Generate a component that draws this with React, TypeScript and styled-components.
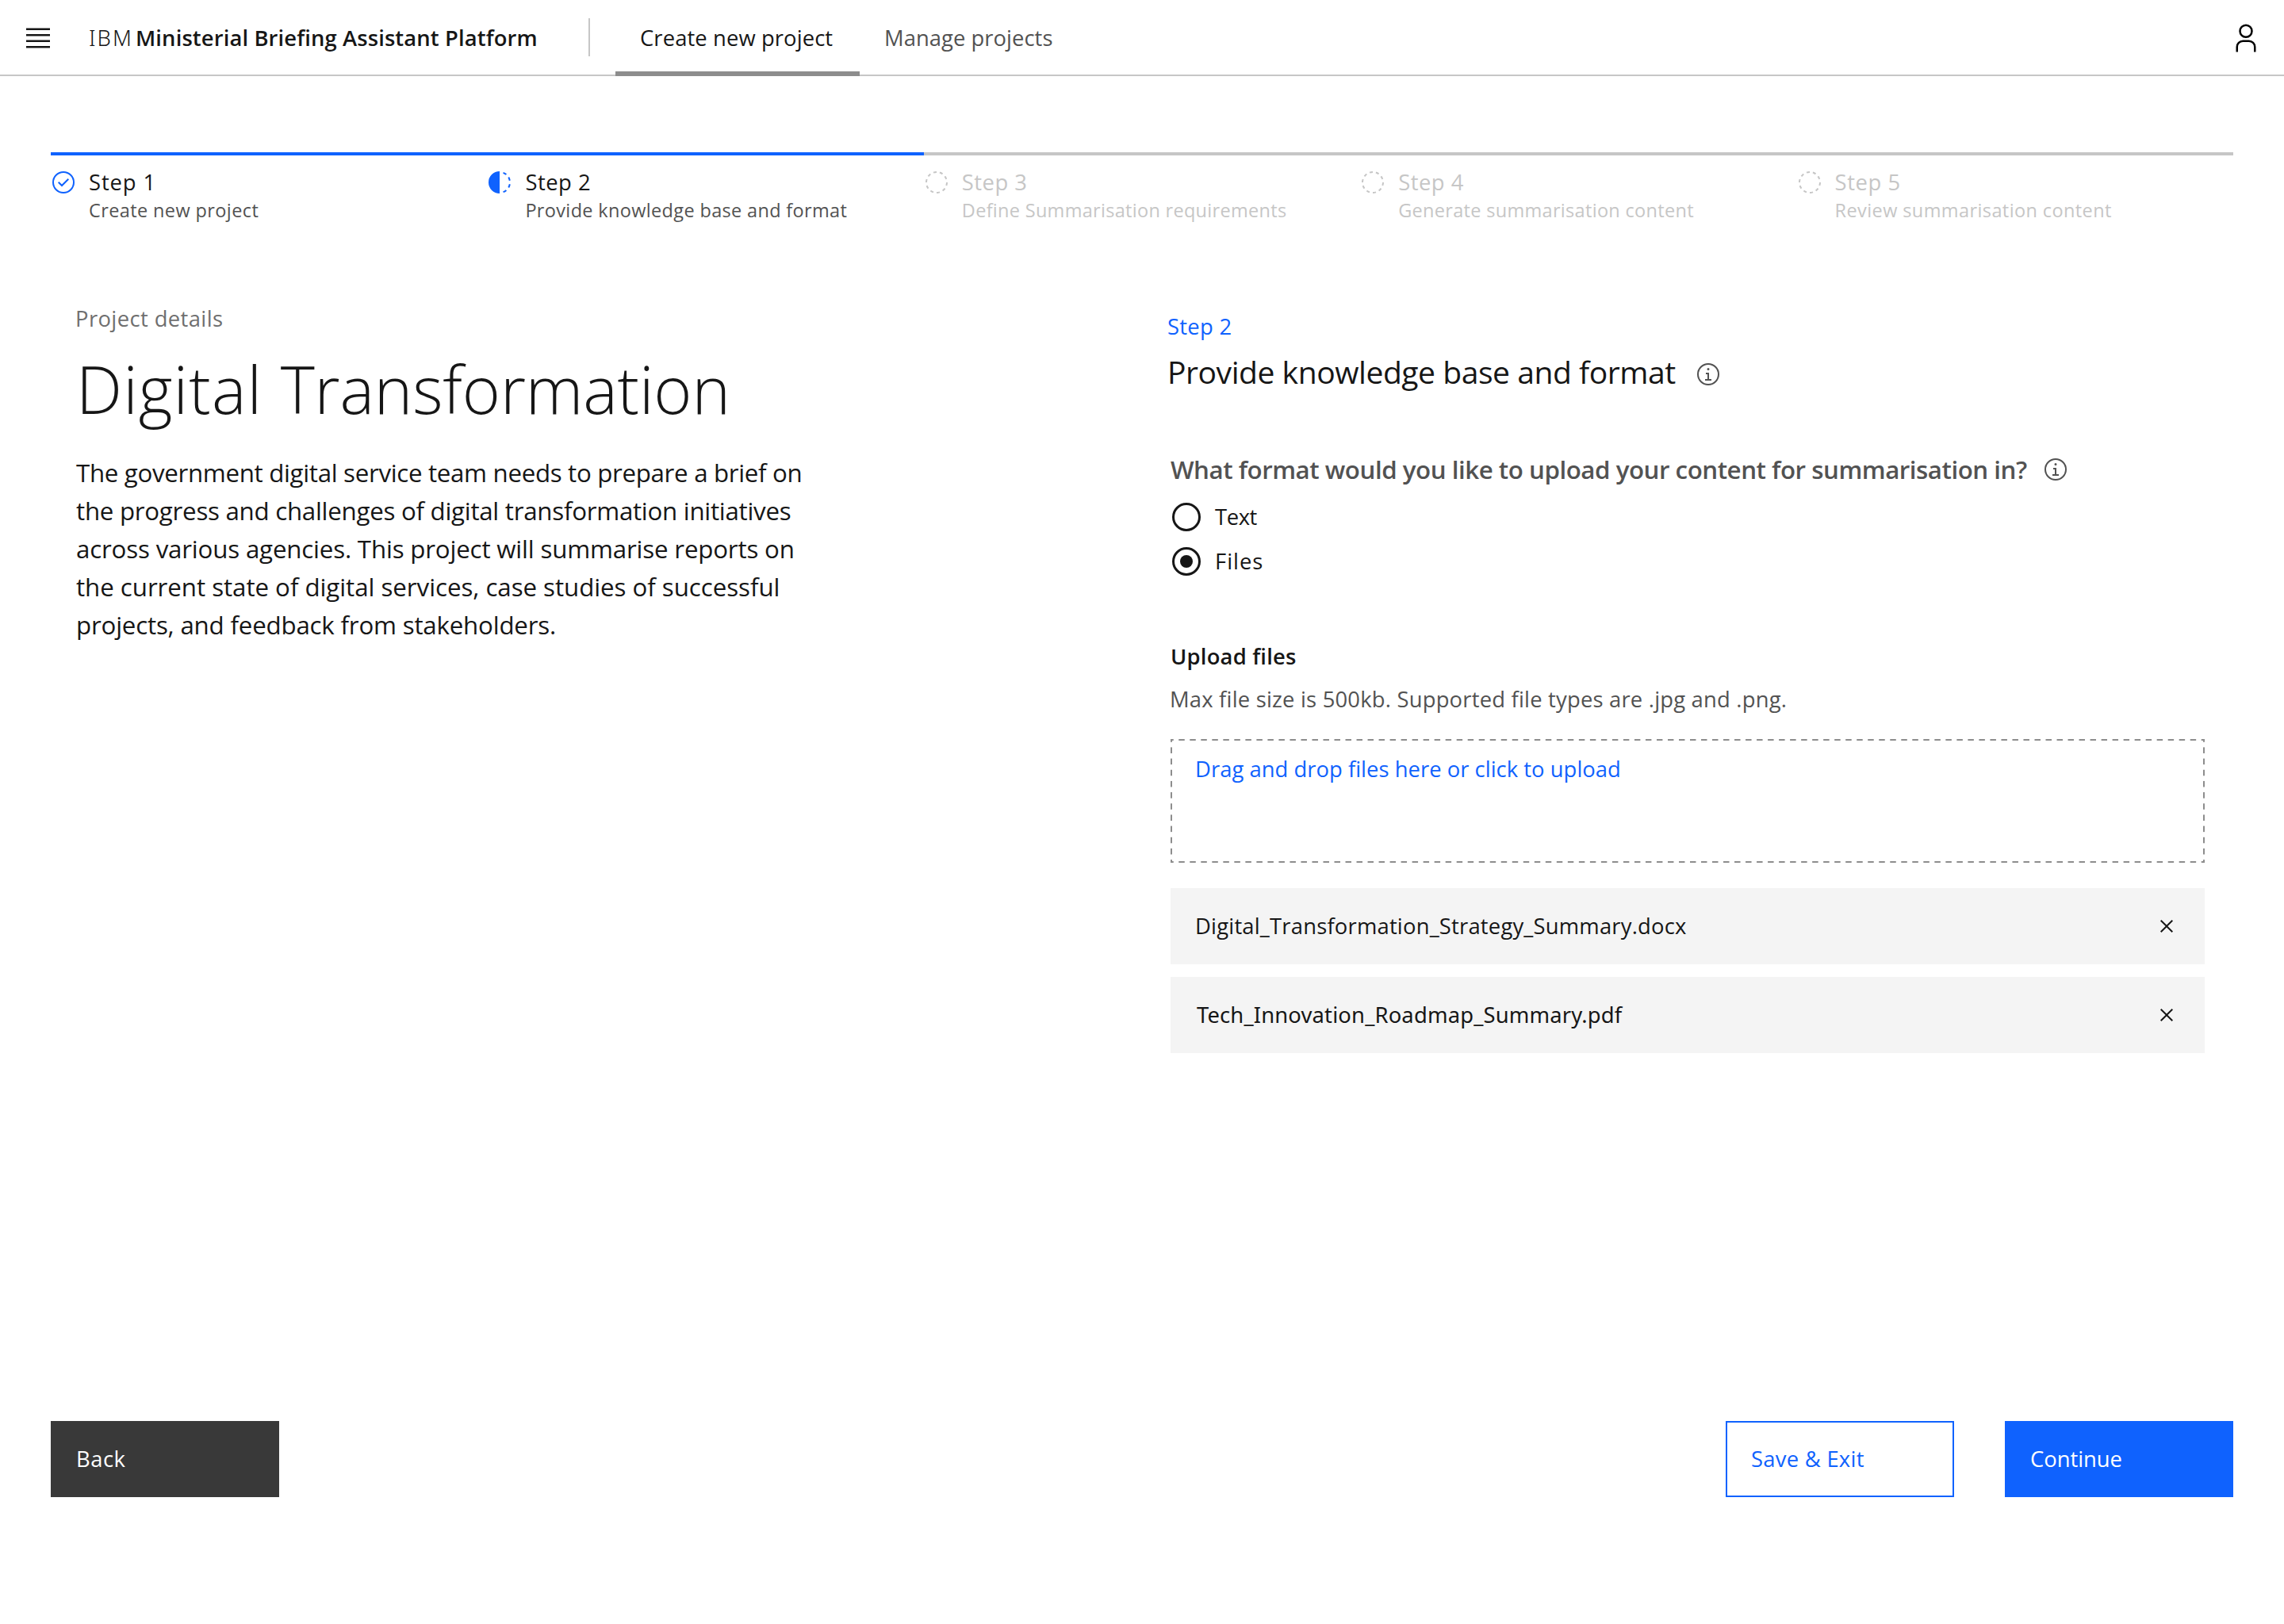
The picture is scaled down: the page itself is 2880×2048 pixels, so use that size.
import React from 'react';
import styled, { createGlobalStyle } from 'styled-components';

const color = {
  text: '#161616',
  secondary: '#525252',
  helper: '#6f6f6f',
  disabled: '#c6c6c6',
  border: '#8d8d8d',
  blue: '#0f62fe',
  dark: '#393939',
  layer: '#f4f4f4',
};

const GlobalStyle = createGlobalStyle`
  * { box-sizing: border-box; }
  body { margin: 0; background: #fff; }
  h1, h2, p { margin: 0; font-weight: inherit; }
  button { margin: 0; border: 0; padding: 0; background: none; font: inherit; text-align: left; }
`;

const Page = styled.div`
  display: flex;
  flex-direction: column;
  height: 2048px;
  font-family: 'Open Sans', 'Noto Sans', sans-serif;
  font-size: 27.4px;
  line-height: 36px;
  color: ${color.text};
  white-space: nowrap;
`;

const Text = styled.span<{ $ls?: number }>`
  letter-spacing: ${(p) => p.$ls ?? 0}px;
`;

const Glyph = styled.svg<{ $size?: number }>`
  display: block;
  flex: none;
  width: ${(p) => p.$size ?? 32}px;
  height: ${(p) => p.$size ?? 32}px;
  fill: currentColor;
`;

const Header = styled.header`
  display: flex;
  align-items: center;
  height: 96px;
  padding: 0 28px;
  border-bottom: 2px solid ${color.disabled};
  & > * { margin-bottom: -2px; }
`;
const Brand = styled.div`
  display: flex;
  width: 636px;
  margin-left: 44px;
  font-weight: 600;
`;
const BrandPrefix = styled.span`
  width: 59px;
  font-family: 'Noto Sans', sans-serif;
  font-weight: 300;
`;
const Divider = styled.div`
  width: 2px;
  height: 48px;
  margin: 0 32px 0 -6px;
  background: ${color.disabled};
`;
const Tab = styled.a<{ $active?: boolean }>`
  width: 308px;
  height: 96px;
  padding: 30px 31px 0;
  color: ${(p) => (p.$active ? color.text : color.secondary)};
  border-bottom: 6px solid ${(p) => (p.$active ? color.border : 'transparent')};
`;
const UserButton = styled.button`
  margin-left: auto;
`;

const Stepper = styled.ol`
  display: grid;
  grid-template-columns: repeat(5, 1fr);
  margin: 96px 64px 0;
  padding: 0;
  list-style: none;
`;
const Step = styled.li<{ $reached: boolean }>`
  display: flex;
  gap: 16px;
  padding-top: 16px;
  border-top: 4px solid ${(p) => (p.$reached ? color.blue : color.disabled)};
  color: ${(p) => (p.$reached ? color.text : color.disabled)};
`;
const StepIcon = styled.div<{ $reached: boolean }>`
  margin-top: 2px;
  color: ${(p) => (p.$reached ? color.blue : color.disabled)};
`;
const StepDesc = styled.div<{ $reached: boolean }>`
  font-size: 23.5px;
  line-height: 34px;
  color: ${(p) => (p.$reached ? color.secondary : color.disabled)};
`;

const Main = styled.main`
  display: grid;
  grid-template-columns: 1376px 1308px;
  padding-left: 96px;
`;
const Details = styled.section`
  padding-top: 102px;
`;
const Overline = styled.div`
  margin-left: -1px;
  color: ${color.helper};
`;
const Title = styled.h1`
  margin-top: 20px;
  font-size: 82.2px;
  line-height: 100px;
  font-weight: 300;
`;
const Summary = styled.p`
  display: flex;
  flex-direction: column;
  margin-top: 32px;
  font-size: 31.3px;
  line-height: 48px;
`;

const Form = styled.section`
  padding-top: 112px;
`;
const StepLink = styled.div`
  color: ${color.blue};
`;
const Heading = styled.h2`
  display: flex;
  justify-content: space-between;
  width: 698px;
  margin-top: 11px;
  font-size: 39.1px;
  line-height: 56px;
`;
const HeadingInfo = styled.span`
  margin-top: 15px;
  color: ${color.secondary};
`;
const Fields = styled.div`
  display: flex;
  flex-direction: column;
  padding: 75px 0 0 4px;
`;
const Question = styled.div`
  display: flex;
  align-items: center;
  justify-content: space-between;
  width: 1132px;
  font-size: 31.3px;
  line-height: 40px;
  font-weight: 600;
  color: ${color.secondary};
`;
const RadioGroup = styled.div`
  display: flex;
  flex-direction: column;
  gap: 20px;
  padding: 22px 0 0 2px;
`;
const Radio = styled.label`
  display: flex;
  gap: 18px;
  height: 36px;
`;
const RadioMark = styled.span<{ $checked?: boolean }>`
  display: grid;
  place-items: center;
  width: 36px;
  height: 36px;
  border: 3px solid ${color.text};
  border-radius: 50%;
  &::after {
    content: '';
    width: 16px;
    height: 16px;
    border-radius: 50%;
    background: ${(p) => (p.$checked ? color.text : 'transparent')};
  }
`;
const UploadLabel = styled.div`
  margin-top: 84px;
  font-weight: 600;
`;
const UploadHint = styled.div`
  margin-top: 18px;
  margin-left: -1px;
  color: ${color.secondary};
`;
const dash = (dir: string) =>
  `linear-gradient(${dir}, ${color.border} 4px, transparent 4px 10px, ${color.border} 10px)`;
const DropZone = styled.div`
  height: 156px;
  margin-top: 32px;
  padding: 20px 31px;
  color: ${color.blue};
  background-image: ${dash('90deg')}, ${dash('90deg')}, ${dash('180deg')}, ${dash('180deg')};
  background-position: 0 0, 0 100%, 0 0, 100% 0;
  background-size: 14px 2px, 14px 2px, 2px 14.18px, 2px 14.18px;
  background-repeat: round no-repeat, round no-repeat, no-repeat round, no-repeat round;
`;
const FileList = styled.div`
  display: flex;
  flex-direction: column;
  gap: 16px;
  margin-top: 32px;
`;
const FileRow = styled.div<{ $plain?: boolean }>`
  display: flex;
  align-items: center;
  justify-content: space-between;
  height: 96px;
  padding: 0 32px 0 ${(p) => (p.$plain ? 33 : 31)}px;
  background: ${color.layer};
  font-family: ${(p) => (p.$plain ? "'Noto Sans', sans-serif" : 'inherit')};
`;

const Footer = styled.footer`
  display: flex;
  gap: 64px;
  margin-top: auto;
  padding: 0 64px 160px;
`;
const Button = styled.button<{ $kind: 'primary' | 'secondary' | 'outline' }>`
  width: 288px;
  height: 96px;
  padding: 0 ${(p) => (p.$kind === 'outline' ? 30 : 32)}px;
  color: ${(p) => (p.$kind === 'outline' ? color.blue : '#fff')};
  background: ${(p) => ({ primary: color.blue, secondary: color.dark, outline: '#fff' })[p.$kind]};
  border: ${(p) => (p.$kind === 'outline' ? `2px solid ${color.blue}` : '0')};
  margin-right: ${(p) => (p.$kind === 'secondary' ? 'auto' : '0')};
`;

const paths = {
  menu: 'M4 6H28V8H4zM4 24H28V26H4zM4 12H28V14H4zM4 18H28V20H4z',
  user: 'M16 4a5 5 0 1 1-5 5 5 5 0 0 1 5-5m0-2a7 7 0 1 0 7 7A7 7 0 0 0 16 2ZM26 30H24V25a5 5 0 0 0-5-5H13a5 5 0 0 0-5 5v5H6V25a7 7 0 0 1 7-7h6a7 7 0 0 1 7 7Z',
  done: 'M14 21.414l-5-5.001L10.413 15 14 18.586 21.585 11 23 12.415 14 21.414zM16 2a14 14 0 1014 14A14 14 0 0016 2zm0 26a12 12 0 1112-12 12 12 0 01-12 12z',
  current:
    'M23.7642 6.8593l1.2851-1.5315A13.976 13.976 0 0020.8672 2.887l-.6836 1.8776A11.9729 11.9729 0 0123.7642 6.8593zM27.81 14l1.9677-.4128A13.8888 13.8888 0 0028.14 9.0457L26.4087 10A12.52 12.52 0 0127.81 14zM20.1836 27.2354l.6836 1.8776a13.976 13.976 0 004.1821-2.4408l-1.2851-1.5315A11.9729 11.9729 0 0120.1836 27.2354zM26.4087 22L28.14 23a14.14 14.14 0 001.6382-4.5872L27.81 18.0659A12.1519 12.1519 0 0126.4087 22zM16 30V2a14 14 0 000 28z',
  pending:
    'M7.7 4.7a14.7 14.7 0 00-3 3.1L6.3 9A13.26 13.26 0 018.9 6.3zM4.6 12.3l-1.9-.6A12.51 12.51 0 002 16H4A11.48 11.48 0 014.6 12.3zM2.7 20.4a14.4 14.4 0 002 3.9l1.6-1.2a12.89 12.89 0 01-1.7-3.3zM7.8 27.3a14.4 14.4 0 003.9 2l.6-1.9A12.89 12.89 0 019 25.7zM11.7 2.7l.6 1.9A11.48 11.48 0 0116 4V2A12.51 12.51 0 0011.7 2.7zM24.2 27.3a15.18 15.18 0 003.1-3.1L25.7 23A11.53 11.53 0 0123 25.7zM27.4 19.7l1.9.6A15.47 15.47 0 0030 16H28A11.48 11.48 0 0127.4 19.7zM29.2 11.6a14.4 14.4 0 00-2-3.9L25.6 8.9a12.89 12.89 0 011.7 3.3zM24.1 4.6a14.4 14.4 0 00-3.9-2l-.6 1.9a12.89 12.89 0 013.3 1.7zM20.3 29.3l-.6-1.9A11.48 11.48 0 0116 28v2A21.42 21.42 0 0020.3 29.3z',
  info: 'M17 22V14H13v2h2v6H12v2h8V22zM16 8a1.5 1.5 0 101.5 1.5A1.5 1.5 0 0016 8zM16 30A14 14 0 1130 16 14 14 0 0116 30zM16 4A12 12 0 1028 16 12 12 0 0016 4z',
  close: 'M24 9.4L22.6 8 16 14.6 9.4 8 8 9.4 14.6 16 8 22.6 9.4 24 16 17.4 22.6 24 24 22.6 17.4 16 24 9.4z',
};
const Icon = ({ name, size }: { name: keyof typeof paths; size?: number }) => (
  <Glyph viewBox="0 0 32 32" $size={size}>
    <path fillRule="evenodd" d={paths[name]} />
  </Glyph>
);

type StepData = { label: string; ls: number; desc: string; dls: number; icon: keyof typeof paths; reached: boolean };
const steps: StepData[] = [
  { label: 'Step 1', ls: 0.9, desc: 'Create new project', dls: 0.39, icon: 'done', reached: true },
  { label: 'Step 2', ls: 0.5, desc: 'Provide knowledge base and format', dls: 0.34, icon: 'current', reached: true },
  { label: 'Step 3', ls: 0.5, desc: 'Define Summarisation requirements', dls: 0.3, icon: 'pending', reached: false },
  { label: 'Step 4', ls: 0.5, desc: 'Generate summarisation content', dls: 0.31, icon: 'pending', reached: false },
  { label: 'Step 5', ls: 0.55, desc: 'Review summarisation content', dls: 0.4, icon: 'pending', reached: false },
];

const summary: [string, number][] = [
  ['The government digital service team needs to prepare a brief on', -0.33],
  ['the progress and challenges of digital transformation initiatives', -0.28],
  ['across various agencies. This project will summarise reports on', -0.19],
  ['the current state of digital services, case studies of successful', -0.06],
  ['projects, and feedback from stakeholders.', -0.21],
];

const files = [
  { name: 'Digital_Transformation_Strategy_Summary.docx', ls: 0.2, plain: false },
  { name: 'Tech_Innovation_Roadmap_Summary.pdf', ls: 0.15, plain: true },
];

export default function App() {
  return (
    <>
      <GlobalStyle />
      <Page>
        <Header>
          <Icon name="menu" size={40} />
          <Brand>
            <BrandPrefix><Text $ls={2.1}>IBM</Text></BrandPrefix>
            <Text $ls={0.12}>Ministerial Briefing Assistant Platform</Text>
          </Brand>
          <Divider />
          <Tab $active><Text $ls={0.1}>Create new project</Text></Tab>
          <Tab><Text $ls={0.04}>Manage projects</Text></Tab>
          <UserButton><Icon name="user" size={40} /></UserButton>
        </Header>
        <Stepper>
          {steps.map((s) => (
            <Step key={s.label} $reached={s.reached}>
              <StepIcon $reached={s.reached}><Icon name={s.icon} /></StepIcon>
              <div>
                <div><Text $ls={s.ls}>{s.label}</Text></div>
                <StepDesc $reached={s.reached}><Text $ls={s.dls}>{s.desc}</Text></StepDesc>
              </div>
            </Step>
          ))}
        </Stepper>
        <Main>
          <Details>
            <Overline><Text $ls={0.4}>Project details</Text></Overline>
            <Title><Text $ls={1.1}>Digital </Text><Text $ls={-0.15}>Transformation</Text></Title>
            <Summary>
              {summary.map(([line, ls]) => (
                <Text key={line} $ls={ls}>{line}</Text>
              ))}
            </Summary>
          </Details>
          <Form>
            <StepLink><Text $ls={0.28}>Step 2</Text></StepLink>
            <Heading>
              <Text $ls={-0.47}>Provide knowledge base and format</Text>
              <HeadingInfo><Icon name="info" /></HeadingInfo>
            </Heading>
            <Fields>
              <Question>
                <Text $ls={-0.48}>What format would you like to upload your content for summarisation in?</Text>
                <Icon name="info" />
              </Question>
              <RadioGroup>
                <Radio><RadioMark /><Text $ls={-0.4}>Text</Text></Radio>
                <Radio><RadioMark $checked /><Text $ls={1}>Files</Text></Radio>
              </RadioGroup>
              <UploadLabel><Text $ls={0.2}>Upload files</Text></UploadLabel>
              <UploadHint><Text $ls={0.2}>Max file size is 500kb. Supported file types are .jpg and .png.</Text></UploadHint>
              <DropZone><Text $ls={0.03}>Drag and drop files here or click to upload</Text></DropZone>
              <FileList>
                {files.map((f) => (
                  <FileRow key={f.name} $plain={f.plain}>
                    <Text $ls={f.ls}>{f.name}</Text>
                    <Icon name="close" />
                  </FileRow>
                ))}
              </FileList>
            </Fields>
          </Form>
        </Main>
        <Footer>
          <Button $kind="secondary"><Text $ls={0.5}>Back</Text></Button>
          <Button $kind="outline"><Text $ls={0.27}>Save &amp; Exit</Text></Button>
          <Button $kind="primary"><Text $ls={-0.04}>Continue</Text></Button>
        </Footer>
      </Page>
    </>
  );
}
